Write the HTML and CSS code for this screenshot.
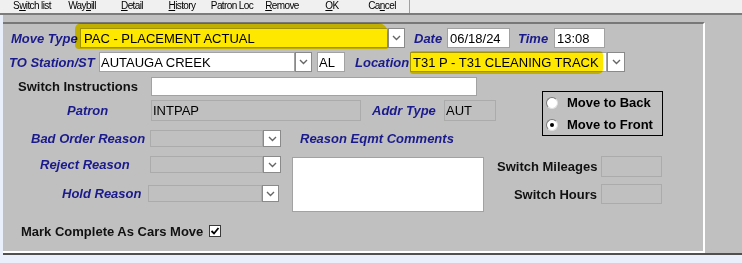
FILE: index.html
```html
<!DOCTYPE html>
<html lang="en">
<head>
	<meta charset="UTF-8">
	<title>Car Move</title>
	<link rel="stylesheet" href="styles.css">
</head>
<body>
	<div class="toolbar">
		<span class="tb-btn">S<u>w</u>itch list</span>
		<span class="tb-btn">Way<u>b</u>ill</span>
		<span class="tb-btn"><u>D</u>etail</span>
		<span class="tb-btn"><u>H</u>istory</span>
		<span class="tb-btn">Patron Loc</span>
		<span class="tb-btn"><u>R</u>emove</span>
		<span class="tb-btn"><u>O</u>K</span>
		<span class="tb-btn">Ca<u>n</u>cel</span>
		<span class="tb-sep"></span>
	</div>
	<div class="frame">
		<div class="panel">
			<div class="row r1">
				<span class="lbl nv w-move">Move Type</span>
				<span class="field w-308">PAC - PLACEMENT ACTUAL</span>
				<span class="drop"><svg width="9" height="6" viewBox="0 0 9 6"><polyline points="1,1 4.5,4.5 8,1" fill="none" stroke="#666" stroke-width="1.4"/></svg></span>
				<span class="lbl nv w-date">Date</span>
				<span class="field w-63">06/18/24</span>
				<span class="lbl nv w-time">Time</span>
				<span class="field w-51">13:08</span>
			</div>
			<div class="row r2">
				<span class="lbl nv w-to">TO Station/ST</span>
				<span class="field w-196">AUTAUGA CREEK</span>
				<span class="drop"><svg width="9" height="6" viewBox="0 0 9 6"><polyline points="1,1 4.5,4.5 8,1" fill="none" stroke="#666" stroke-width="1.4"/></svg></span>
				<span class="field w-al">AL</span>
				<span class="lbl nv w-loc">Location</span>
				<span class="field w-197">T31 P - T31 CLEANING TRACK</span>
				<span class="drop d18"><svg width="9" height="6" viewBox="0 0 9 6"><polyline points="1,1 4.5,4.5 8,1" fill="none" stroke="#666" stroke-width="1.4"/></svg></span>
			</div>
			<div class="lower">
				<div class="col-left">
					<div class="row r3">
						<span class="lbl bk w-si">Switch Instructions</span>
						<span class="field w-326"></span>
					</div>
					<div class="row r4">
						<span class="lbl nv w-patron">Patron</span>
						<span class="field dis w-210">INTPAP</span>
						<span class="lbl nv w-addr">Addr Type</span>
						<span class="field dis w-52">AUT</span>
					</div>
					<div class="row r5">
						<span class="lbl nv w-bad">Bad Order Reason</span>
						<span class="field dis w-113"></span>
						<span class="drop d18"><svg width="9" height="6" viewBox="0 0 9 6"><polyline points="1,1 4.5,4.5 8,1" fill="none" stroke="#666" stroke-width="1.4"/></svg></span>
						<span class="lbl nv w-eqmt">Reason Eqmt Comments</span>
					</div>
					<div class="block">
						<div class="sel-col">
							<div class="row r6">
								<span class="lbl nv w-rej">Reject Reason</span>
								<span class="field dis w-113"></span>
								<span class="drop d18"><svg width="9" height="6" viewBox="0 0 9 6"><polyline points="1,1 4.5,4.5 8,1" fill="none" stroke="#666" stroke-width="1.4"/></svg></span>
							</div>
							<div class="row r7">
								<span class="lbl nv w-hold">Hold Reason</span>
								<span class="field dis w-114"></span>
								<span class="drop"><svg width="9" height="6" viewBox="0 0 9 6"><polyline points="1,1 4.5,4.5 8,1" fill="none" stroke="#666" stroke-width="1.4"/></svg></span>
							</div>
						</div>
						<div class="memo"></div>
					</div>
				</div>
				<div class="col-right">
					<div class="radios">
						<div class="opt"><span class="radio"></span>Move to Back</div>
						<div class="opt"><span class="radio on"></span>Move to Front</div>
					</div>
					<div class="row rm">
						<span class="lbl bk w-sw">Switch Mileages</span>
						<span class="field dis w-61"></span>
					</div>
					<div class="row rh">
						<span class="lbl bk w-sw">Switch Hours</span>
						<span class="field dis w-61"></span>
					</div>
				</div>
			</div>
			<div class="row r8">
				<span class="lbl bk">Mark Complete As Cars Move</span>
				<span class="check"><svg width="10" height="10" viewBox="0 0 10 10"><polyline points="1.5,5 4,7.5 8.5,2" fill="none" stroke="#000" stroke-width="1.8"/></svg></span>
			</div>
			<!-- marker highlights drawn over the form -->
			<span class="hl hl-move"></span>
			<span class="hl hl-loc"></span>
		</div>
	</div>
</body>
</html>
```
FILE: styles.css
```css
*{
	margin:0;
	padding:0;
	box-sizing:border-box;
}
body{
	width:742px;
	height:263px;
	overflow:hidden;
	background:#e9f0fb;
	font-family:"Liberation Sans", Arial, sans-serif;
	font-size:13px;
	color:#000;
}
.toolbar{
	height:15px;
	display:flex;
	padding-left:7px;
	background:#f0f0f0;
	border-bottom:2px solid #7c7c7c;
}
.tb-btn{
	width:50px;
	text-align:center;
	font-size:10px;
	line-height:12px;
	letter-spacing:-0.6px;
	color:#000;
}
.tb-sep{
	width:1px;
	height:13px;
	margin-left:2px;
	background:#a0a0a0;
}
.frame{
	margin-left:3px;
	height:240px;
	padding-top:7px;
	background:#c0c0c0;
	border-bottom:2px solid #505050;
}
.panel{
	position:relative;
	width:702px;
	height:231px;
	border-top:2px solid #787878;
	border-right:2px solid #fff;
	border-bottom:2px solid #fff;
}
.row{
	display:flex;
	align-items:center;
}
.lbl{
	font-weight:bold;
	white-space:nowrap;
}
.nv{
	font-style:italic;
	color:#1a1a8c;
}
.bk{
	color:#111;
}
.field{
	height:100%;
	display:flex;
	align-items:center;
	padding-left:2px;
	background:#fff;
	border:1px solid #a2a2a2;
	white-space:nowrap;
	overflow:hidden;
}
.field.dis{
	background:transparent;
	border-color:#ababab;
}
.drop{
	width:17px;
	height:100%;
	display:flex;
	align-items:center;
	justify-content:center;
	background:#fff;
	border:1px solid #8a8a8a;
}
.drop.d18{
	width:18px;
}
.r1{
	margin-top:4px;
	height:20px;
}
.r2{
	margin-top:4px;
	height:20px;
}
.w-move{ margin-left:8px; width:69px; }
.w-308{ width:308px; padding-left:3px; }
.w-date{ margin-left:9px; width:33px; }
.w-63{ width:63px; }
.w-time{ margin-left:8px; width:36px; }
.w-51{ width:51px; }
.w-to{ margin-left:6px; width:90px; }
.w-196{ width:196px; padding-left:1px; }
.w-al{ margin-left:5px; width:28px; padding-left:1px; }
.w-loc{ margin-left:10px; width:55px; }
.w-197{ width:197px; }

.lower{
	margin-top:5px;
	display:flex;
}
.col-left{
	width:494px;
}
.r3{ height:19px; }
.w-si{ margin-left:15px; width:133px; }
.w-326{ width:326px; }
.r4{ margin-top:4px; height:21px; }
.w-patron{ margin-left:64px; width:84px; }
.w-210{ width:210px; padding-left:1px; }
.w-addr{ margin-left:11px; width:72px; }
.w-52{ width:52px; padding-left:1px; }
.r5{ margin-top:9px; height:17px; }
.w-bad{ margin-left:28px; width:119px; }
.w-113{ width:113px; }
.w-114{ width:114px; }
.w-eqmt{ margin-left:19px; }
.block{
	margin-top:9px;
	display:flex;
}
.sel-col{
	width:289px;
}
.r6{ height:17px; }
.r7{ margin-top:12px; height:17px; }
.w-rej{ margin-left:37px; width:110px; }
.w-hold{ margin-left:59px; width:86px; }
.memo{
	margin-top:1px;
	width:192px;
	height:55px;
	background:#fff;
	border:1px solid #a2a2a2;
}

.col-right{
	display:flex;
	flex-direction:column;
}
.radios{
	margin-top:14px;
	margin-left:45px;
	width:121px;
	height:45px;
	padding-left:3px;
	border:1px solid #000;
	display:flex;
	flex-direction:column;
	gap:1px;
}
.opt{
	height:21px;
	display:flex;
	align-items:center;
	font-weight:bold;
}
.radio{
	position:relative;
	width:12px;
	height:12px;
	margin-right:9px;
	border-radius:50%;
	background:#fff;
	border:1px solid;
	border-color:#7a7a7a #e0e0e0 #e0e0e0 #7a7a7a;
}
.radio.on::after{
	content:'';
	position:absolute;
	left:3px;
	top:3px;
	width:4px;
	height:4px;
	border-radius:50%;
	background:#000;
}
.rm{ margin-top:20px; height:21px; }
.rh{ margin-top:7px; height:20px; }
.w-sw{ width:100px; margin-right:4px; text-align:right; }
.w-61{ width:61px; }

.r8{
	margin-top:12px;
	height:14px;
	padding-left:18px;
}
.check{
	width:12px;
	height:12px;
	margin-left:6px;
	display:flex;
	align-items:center;
	justify-content:center;
	background:#fff;
	border:1px solid #3a3a3a;
}

.hl{
	position:absolute;
	background:#ffe800;
	mix-blend-mode:multiply;
}
.hl-move{
	left:72px;
	top:-1px;
	width:313px;
	height:26px;
	border-radius:6px 10px 2px 4px;
}
.hl-loc{
	left:407px;
	top:27px;
	width:193px;
	height:23px;
	border-radius:3px 4px 5px 3px;
}
```
